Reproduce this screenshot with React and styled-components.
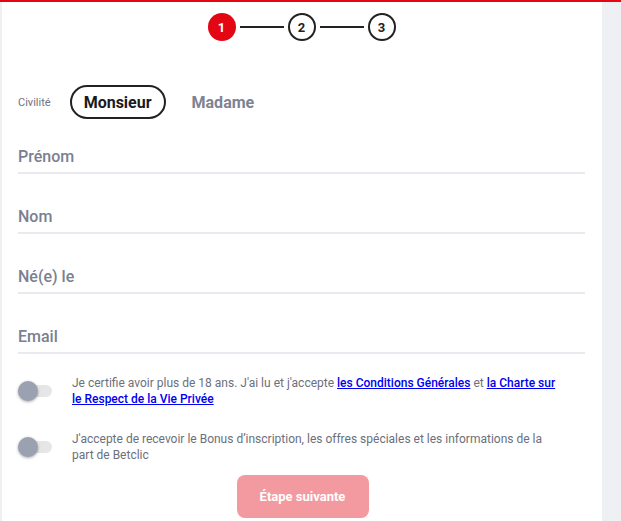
import React from 'react'
import styled, { createGlobalStyle } from 'styled-components'

const Global = createGlobalStyle`
  html, body {
    margin: 0;
    padding: 0;
    background: #eef0f4;
    font-family: Roboto, "Liberation Sans", Arial, sans-serif;
  }
`

const Page = styled.div`
  border-top: 2px solid #e30613;
  height: 519px;
  display: flex;
`

const Panel = styled.div`
  margin-left: 2px;
  width: 600px;
  background: #fff;
  box-sizing: border-box;
  padding: 0 17px 0 16px;
  display: flex;
  flex-direction: column;
`

const Steps = styled.div`
  display: flex;
  align-items: center;
  justify-content: center;
  padding-top: 11px;
  gap: 4px;
`

const Step = styled.div`
  width: 28px;
  height: 28px;
  border-radius: 50%;
  box-sizing: border-box;
  display: flex;
  align-items: center;
  justify-content: center;
  font-size: 13px;
  font-weight: 700;
  background: ${p => (p.$active ? '#e30613' : '#fff')};
  color: ${p => (p.$active ? '#fff' : '#222')};
  border: ${p => (p.$active ? 'none' : '2px solid #222')};
`

const Line = styled.div`
  width: 44px;
  height: 2px;
  background: #222;
`

const CivilityRow = styled.div`
  display: flex;
  align-items: center;
  margin-top: 44px;
`

const CivilityLabel = styled.span`
  font-size: 11px;
  color: #6e7380;
  margin-right: 19px;
`

const Choice = styled.button`
  font-family: inherit;
  height: 34px;
  box-sizing: border-box;
  border-radius: 17px;
  padding: 0 12px;
  font-size: 16px;
  font-weight: 700;
  background: #fff;
  cursor: pointer;
  border: 2px solid ${p => (p.$selected ? '#222' : 'transparent')};
  color: ${p => (p.$selected ? '#1a1a1a' : '#7d8391')};
  margin-right: ${p => (p.$selected ? '12px' : '0')};
`

const Field = styled.div`
  margin-top: ${p => p.$first ? '28px' : '33px'};
  padding-bottom: 5px;
  border-bottom: 2px solid #e9eaef;
`

const FieldLabel = styled.div`
  font-size: 16px;
  line-height: 20px;
  font-weight: 500;
  color: #7a8090;
`

const Consent = styled.div`
  display: flex;
  align-items: center;
  gap: 20px;
  margin-top: ${p => p.$mt};
`

const Toggle = styled.div`
  position: relative;
  width: 34px;
  height: 12px;
  border-radius: 6px;
  background: #e6e6e8;
  flex-shrink: 0;

  &::after {
    content: '';
    position: absolute;
    left: 0;
    top: -4px;
    width: 20px;
    height: 20px;
    border-radius: 50%;
    background: #9aa1b1;
    box-shadow: 0 1px 3px rgba(0, 0, 0, 0.35);
  }
`

const ConsentText = styled.p`
  margin: 0;
  width: 494px;
  font-size: 12px;
  line-height: 16px;
  color: #6b707c;

  a {
    color: #0000ee;
    font-weight: 500;
    text-decoration: underline;
  }
`

const Submit = styled.button`
  font-family: inherit;
  align-self: center;
  margin-top: 12px;
  margin-left: 2px;
  width: 132px;
  height: 43px;
  border: none;
  border-radius: 8px;
  background: #f39aa1;
  color: #fff;
  font-size: 13px;
  font-weight: 700;
`

const fields = ['Prénom', 'Nom', 'Né(e) le', 'Email']

export default function App() {
  return (
    <Page>
      <Global />
      <Panel>
        <Steps>
          <Step $active>1</Step>
          <Line />
          <Step>2</Step>
          <Line />
          <Step>3</Step>
        </Steps>
        <CivilityRow>
          <CivilityLabel>Civilité</CivilityLabel>
          <Choice $selected>Monsieur</Choice>
          <Choice>Madame</Choice>
        </CivilityRow>
        {fields.map((f, i) => (
          <Field key={f} $first={i === 0}>
            <FieldLabel>{f}</FieldLabel>
          </Field>
        ))}
        <Consent $mt="21px">
          <Toggle />
          <ConsentText>
            Je certifie avoir plus de 18 ans. J'ai lu et j'accepte{' '}
            <a href="#">les Conditions Générales</a> et{' '}
            <a href="#">la Charte sur le Respect de la Vie Privée</a>
          </ConsentText>
        </Consent>
        <Consent $mt="24px">
          <Toggle />
          <ConsentText>
            J'accepte de recevoir le Bonus d’inscription, les offres spéciales et les informations de la part de Betclic
          </ConsentText>
        </Consent>
        <Submit>Étape suivante</Submit>
      </Panel>
    </Page>
  )
}
